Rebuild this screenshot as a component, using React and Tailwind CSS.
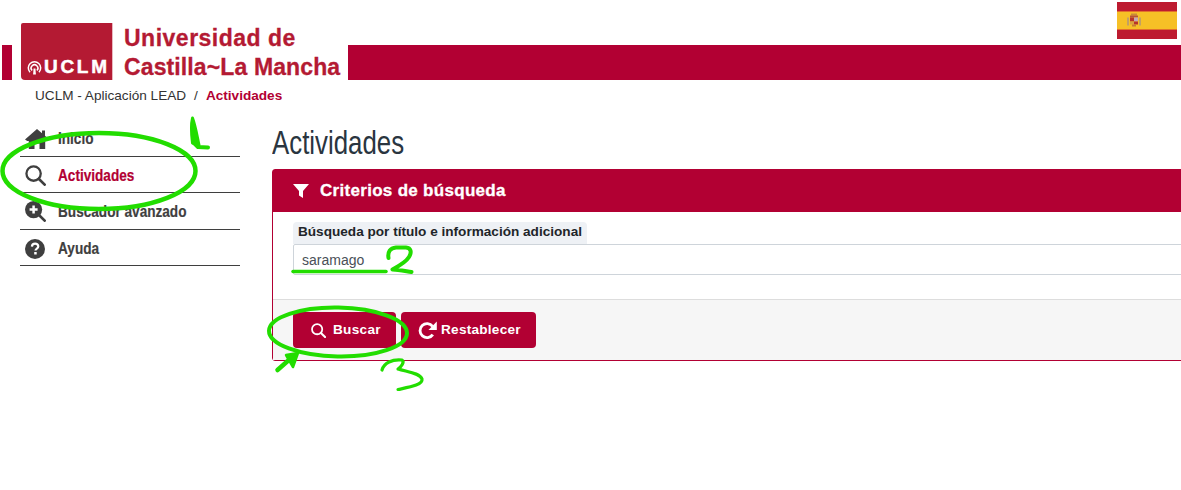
import React from "react";

const sans = "font-['Liberation_Sans',Arial,sans-serif]";

function Home({ className }) {
  return (
    <svg viewBox="0 0 24 20" className={className} fill="#3f3f3f">
      <path d="M12 0 L17 4.2 V1.5 H20 V6.8 L24 10.5 L21.8 12 L20.2 12 V20 H14.5 V14.5 H9.5 V20 H3.8 V12 L2.2 12 L0 10.5 Z" />
    </svg>
  );
}

function Search({ className, color = "#3f3f3f", width = 2.4 }) {
  return (
    <svg viewBox="0 0 22 22" className={className} fill="none" stroke={color} strokeWidth={width} strokeLinecap="round">
      <circle cx="9" cy="9" r="7.5" />
      <path d="M14.6 14.6 L20.6 20.6" strokeWidth={width + 0.4} />
    </svg>
  );
}

function SearchPlus({ className }) {
  return (
    <svg viewBox="0 0 22 22" className={className} fill="none" stroke="#3f3f3f" strokeLinecap="round">
      <circle cx="9" cy="9" r="9" fill="#3f3f3f" stroke="none" />
      <path d="M14.6 14.6 L20.6 20.6" strokeWidth="2.8" />
      <path d="M9 4.8 V13.2 M4.8 9 H13.2" stroke="#fff" strokeWidth="2.6" strokeLinecap="butt" />
    </svg>
  );
}

function Help({ className }) {
  return (
    <svg viewBox="0 0 20 20" className={className}>
      <circle cx="10" cy="10" r="10" fill="#3f3f3f" />
      <path d="M6.9 7.6 C7 5.6 8.4 4.7 10.1 4.7 C12 4.7 13.3 5.8 13.3 7.4 C13.3 9.6 10.5 9.6 10.5 11.6" fill="none" stroke="#fff" strokeWidth="2.2" />
      <rect x="9.2" y="13" width="2.5" height="2.5" fill="#fff" />
    </svg>
  );
}

function Filter({ className }) {
  return (
    <svg viewBox="0 0 16 14" className={className} fill="#fff">
      <path d="M0 0 H16 L10 7 V14 L6 11.5 V7 Z" />
    </svg>
  );
}

function Redo({ className }) {
  return (
    <svg viewBox="0 0 20 20" className={className} fill="none">
      <path d="M15.6 14.4 A7.4 7.4 0 1 1 15.4 5.6" stroke="#fff" strokeWidth="3" />
      <path d="M19.8 0.6 V9.4 H11 Z" fill="#fff" />
    </svg>
  );
}

function Flag() {
  return (
    <div className="flex h-[37px] w-[60px] flex-col">
      <div className="h-[9px] bg-[#bd1b30]" />
      <div className="flex h-[19px] items-center border-y border-[#e2702b] bg-[#f6c026] pl-[10px]">
        <svg viewBox="0 0 14 14" className="h-[15px] w-[14px]">
          <rect x="0" y="4" width="2" height="8" fill="#c2a064" />
          <rect x="12" y="4" width="2" height="8" fill="#c2a064" />
          <rect x="4" y="0" width="6" height="2" fill="#c98a3a" />
          <rect x="3" y="2" width="8" height="2" fill="#b5533a" />
          <rect x="3" y="4" width="4" height="4" fill="#b8332a" />
          <rect x="7" y="4" width="4" height="4" fill="#c4a8b4" />
          <rect x="3" y="8" width="4" height="3" fill="#d9a33c" />
          <rect x="7" y="8" width="4" height="3" fill="#b8332a" />
          <rect x="5" y="11" width="4" height="2" fill="#c77a33" />
        </svg>
      </div>
      <div className="h-[9px] bg-[#bd1b30]" />
    </div>
  );
}

function LogoMark() {
  return (
    <div className="flex h-[57px] w-[92px] items-end rounded-tl-[2px] rounded-bl-[4px] border-r border-[#e8b8c0] bg-[#b41a33] pb-[4px] pl-[6px]">
      <svg viewBox="0 0 16 16" className="mb-[1px] h-[15px] w-[15px] shrink-0" fill="none" stroke="#fff" strokeWidth="1.6">
        <path d="M3.2 13 A6.6 6.6 0 1 1 12.8 13" />
        <path d="M5.4 11.2 A3.6 3.6 0 1 1 10.6 11.2" />
        <path d="M7 9 H9 L9.5 15.5 H6.5 Z" fill="#fff" stroke="none" />
      </svg>
      <span className={`${sans} ml-[2px] text-[19px] leading-[19px] font-bold tracking-[2.7px] text-white [-webkit-text-stroke:0.5px_#fff]`}>UCLM</span>
    </div>
  );
}

function NavRow({ icon, children, active }) {
  return (
    <li className="flex h-[36.6px] items-center border-b border-[#3f3f3f] pt-[2px] pl-[5px]">
      <span className="flex w-[33px] shrink-0 items-center">{icon}</span>
      <span
        className={`${sans} inline-block origin-left scale-x-[0.8] text-[17px] font-bold whitespace-nowrap ${
          active ? "text-[#b20033] [-webkit-text-stroke:0.2px_#b20033]" : "text-[#3f3f3f] [-webkit-text-stroke:0.2px_#3f3f3f]"
        }`}
      >
        {children}
      </span>
    </li>
  );
}

function Annotations() {
  const g = "#22dd00";
  return (
    <svg className="pointer-events-none absolute top-0 left-0 h-[490px] w-[1181px]" viewBox="0 0 1181 490" fill="none" stroke={g} strokeLinecap="round" strokeLinejoin="round">
      <ellipse cx="99" cy="171" rx="96.5" ry="38" strokeWidth="4.5" />
      <path d="M192.5 118 C190.5 126 191.5 135 192.5 143 L199 145 C197 136 195.5 126 192.5 118 Z" fill={g} strokeWidth="3" />
      <path d="M194 143 L198 147 L208 147.5" strokeWidth="4" />
      <path d="M293 271.5 H386" strokeWidth="3.5" />
      <path d="M388.5 258 C387.5 252 390 248 396 247.5 L406 247.5 C411 248 412 252 409 257 C406 262 399 266 392.5 269.5 C398 269.5 405 271 411.5 272" strokeWidth="4" />
      <ellipse cx="338" cy="332" rx="69" ry="24.5" strokeWidth="4" transform="rotate(1 338 332)" />
      <path d="M277.5 370 L290 359" strokeWidth="4.5" />
      <path d="M286 355 L298 353 L293 367 Z" fill={g} strokeWidth="2.5" />
      <path d="M382 370 C384 363 392 359 402 360 C405 362 401 367 398 369 C408 372 420 373 422 379 C423 385 410 387 398 389.5" strokeWidth="3.2" />
    </svg>
  );
}

export default function App() {
  return (
    <div className={`${sans} relative h-[490px] w-[1181px] overflow-hidden bg-white`}>
      <header className="relative h-[80px]">
        <div className="absolute top-[2px] right-[4px]">
          <Flag />
        </div>
        <div className="flex h-full items-end pl-[2px]">
          <div className="flex h-[35px] w-full items-end bg-[#b20033]">
            <div className="ml-[10px] flex h-[57px] w-[336px] shrink-0 bg-white pl-[9px]">
              <LogoMark />
              <div className="ml-[11px] pt-[1px] text-[23px] leading-[29px] font-bold whitespace-nowrap text-[#b41a33] [-webkit-text-stroke:0.3px_#b41a33]">
                <div className="tracking-[0.5px]">Universidad de</div>
                <div className="tracking-[0.12px]">Castilla~La Mancha</div>
              </div>
            </div>
          </div>
        </div>
      </header>

      <nav className="flex h-[32px] items-center pl-[35px] text-[13.6px] whitespace-nowrap">
        <span className="text-[#333]">UCLM - Aplicación LEAD</span>
        <span className="mx-[8px] text-[#333]">/</span>
        <span className="font-bold text-[#b20033]">Actividades</span>
      </nav>

      <div className="flex pl-[20px]">
        <ul className="mt-[8px] w-[220px] shrink-0">
          <NavRow icon={<Home className="h-[20px] w-[24px]" />}>Inicio</NavRow>
          <NavRow icon={<Search className="h-[21px] w-[21px]" />} active>Actividades</NavRow>
          <NavRow icon={<SearchPlus className="h-[21px] w-[21px]" />}>Buscador avanzado</NavRow>
          <NavRow icon={<Help className="h-[20px] w-[20px]" />}>Ayuda</NavRow>
        </ul>

        <main className="ml-[32px] w-[1000px] shrink-0">
          <h1 className="mt-[11px] mb-[7px] origin-left scale-x-[0.76] text-[34px] leading-[39px] whitespace-nowrap text-[#2a3540]">Actividades</h1>
          <section className="rounded-[3px] border border-[#b20033]">
            <div className="flex h-[42px] items-center bg-[#b20033] pl-[20px] text-white">
              <Filter className="h-[14px] w-[16px]" />
              <span className="ml-[11px] text-[17px] font-bold tracking-[0.3px] [-webkit-text-stroke:0.3px_#fff]">Criterios de búsqueda</span>
            </div>
            <div className="h-[87px] px-[20px] pt-[10px]">
              <label className="block h-[22px] w-fit rounded-t-[4px] bg-[#eef1f5] px-[5px] text-[13.6px] leading-[20px] font-bold text-[#212529]">
                Búsqueda por título e información adicional
              </label>
              <div className="flex h-[31px] items-center rounded-[2px] border border-[#ced4da] pt-[2px] pl-[8px] text-[14px] text-[#495057]">saramago</div>
            </div>
            <div className="flex h-[61px] gap-[5px] border-t border-[#ddd] bg-[#f6f6f6] pt-[12px] pl-[20px]">
              <button className="flex h-[36px] w-[103px] items-center rounded-[4px] bg-[#b20033] pl-[18px] text-[13.6px] font-bold tracking-[0.3px] text-white">
                <Search className="h-[15px] w-[15px]" color="#fff" width={2.6} />
                <span className="ml-[7px]">Buscar</span>
              </button>
              <button className="flex h-[36px] w-[135px] items-center rounded-[4px] bg-[#b20033] pl-[17px] text-[13.6px] font-bold tracking-[0.25px] text-white">
                <Redo className="h-[19px] w-[19px]" />
                <span className="ml-[4px]">Restablecer</span>
              </button>
            </div>
          </section>
        </main>
      </div>
      <Annotations />
    </div>
  );
}
